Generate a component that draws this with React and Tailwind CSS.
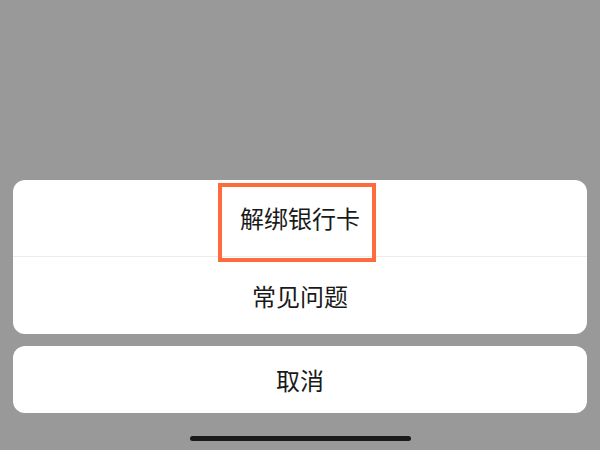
export default function App() {
  const font = { fontFamily: '"Noto Sans CJK SC", "Noto Sans", sans-serif' };

  return (
    <div
      className="w-[600px] h-[450px] bg-[#999999] flex flex-col justify-end overflow-hidden"
      style={font}
    >
      {/* Action sheet */}
      <div className="mx-[13px] bg-white rounded-[12px] relative">
        <div className="h-[77px] flex items-center justify-center text-[24px] text-[#1a1a1a] border-b border-[#ececec]">
          解绑银行卡
        </div>
        <div className="h-[77px] flex items-center justify-center text-[24px] text-[#1a1a1a]">
          常见问题
        </div>

        {/* highlight box */}
        <div className="absolute left-[205px] top-[3px] w-[158px] h-[79px] border-4 border-[#ff6b3d]" />
      </div>

      <div className="mx-[13px] mt-[12px] h-[67px] bg-white rounded-[12px] flex items-center justify-center text-[24px] text-[#1a1a1a]">
        取消
      </div>

      {/* home indicator */}
      <div className="h-[37px] flex items-start justify-center pt-[23px]">
        <div className="w-[221px] h-[5px] rounded-full bg-[#1a1a1a]" />
      </div>
    </div>
  );
}
